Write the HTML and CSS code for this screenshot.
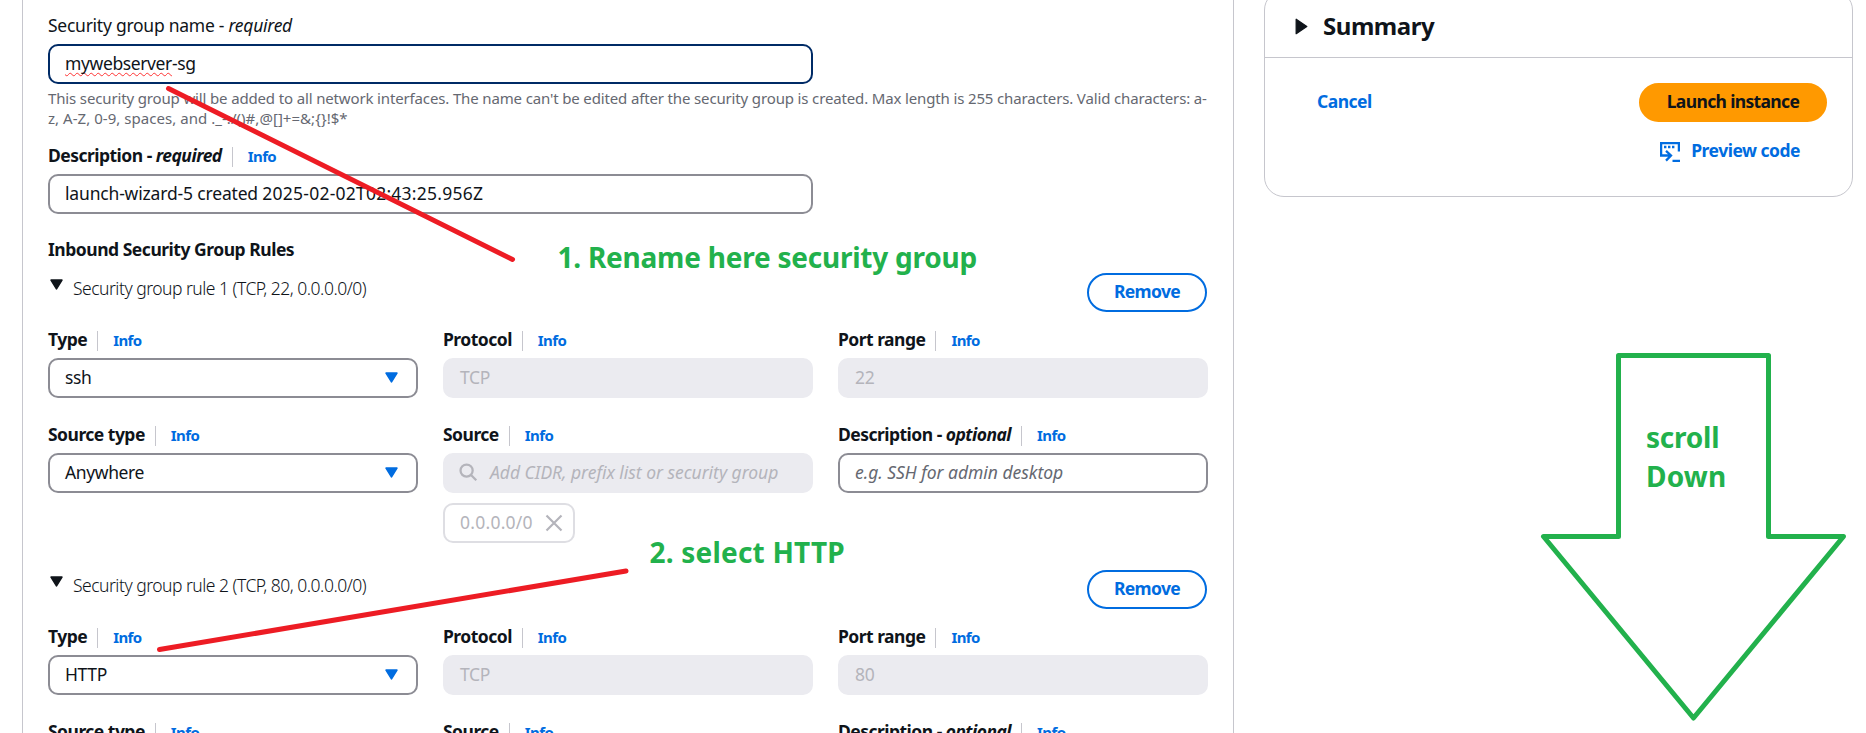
FILE: index.html
```html
<!DOCTYPE html>
<html lang="en">
<head>
<meta charset="utf-8">
<title>Launch an instance</title>
<link rel="stylesheet" href="styles.css">
</head>
<body>
<main class="page">
  <section class="panel">
    <div class="field half">
      <div class="label plain">Security group name - <em>required</em></div>
      <div class="input focused"><span><span class="misspelled">mywebserver</span>-sg</span></div>
    </div>
    <p class="hint">This security group will be added to all network interfaces. The name can't be edited after the security group is created. Max length is 255 characters. Valid characters: a-<br><span class="hint-end">z, A-Z, 0-9, spaces, and ._-:/()#,@[]+=&amp;;{}!$*</span></p>
    <div class="field half">
      <div class="label">Description - <em>required</em><a class="info">Info</a></div>
      <div class="input"><span><span class="origin">launch-wizard-5 created </span><span class="stamp">2025-02-02T02:43:25.956Z</span></span></div>
    </div>
    <h3 class="heading">Inbound Security Group Rules</h3>

    <div class="rule">
      <div class="rule-head">
        <svg class="caret" viewBox="0 0 12 10"><path d="M1 1h10L6 9z"/></svg>
        <span class="rule-title">Security group rule 1 (TCP, 22, 0.0.0.0/0)</span>
        <button class="btn outline">Remove</button>
      </div>
      <div class="grid">
        <div class="field">
          <div class="label">Type<a class="info">Info</a></div>
          <div class="input select">ssh<svg class="caret" viewBox="0 0 12 10"><path d="M1 1h10L6 9z"/></svg></div>
        </div>
        <div class="field">
          <div class="label">Protocol<a class="info">Info</a></div>
          <div class="input disabled">TCP</div>
        </div>
        <div class="field">
          <div class="label">Port range<a class="info">Info</a></div>
          <div class="input disabled">22</div>
        </div>
        <div class="field">
          <div class="label">Source type<a class="info">Info</a></div>
          <div class="input select">Anywhere<svg class="caret" viewBox="0 0 12 10"><path d="M1 1h10L6 9z"/></svg></div>
        </div>
        <div class="field">
          <div class="label">Source<a class="info">Info</a></div>
          <div class="input disabled search"><svg class="search-icon" viewBox="0 0 20 20"><circle cx="8" cy="8" r="6.4"/><path d="M12.6 12.6L18.2 18.2"/></svg><em>Add CIDR, prefix list or security group</em></div>
          <div class="token">0.0.0.0/0<svg class="close" viewBox="0 0 18 18"><path d="M1.5 1.5l15 15M16.5 1.5l-15 15"/></svg></div>
        </div>
        <div class="field">
          <div class="label">Description - <em>optional</em><a class="info">Info</a></div>
          <div class="input placeholder"><em>e.g. SSH for admin desktop</em></div>
        </div>
      </div>
    </div>

    <div class="rule">
      <div class="rule-head">
        <svg class="caret" viewBox="0 0 12 10"><path d="M1 1h10L6 9z"/></svg>
        <span class="rule-title">Security group rule 2 (TCP, 80, 0.0.0.0/0)</span>
        <button class="btn outline">Remove</button>
      </div>
      <div class="grid">
        <div class="field">
          <div class="label">Type<a class="info">Info</a></div>
          <div class="input select">HTTP<svg class="caret" viewBox="0 0 12 10"><path d="M1 1h10L6 9z"/></svg></div>
        </div>
        <div class="field">
          <div class="label">Protocol<a class="info">Info</a></div>
          <div class="input disabled">TCP</div>
        </div>
        <div class="field">
          <div class="label">Port range<a class="info">Info</a></div>
          <div class="input disabled">80</div>
        </div>
        <div class="field"><div class="label">Source type<a class="info">Info</a></div></div>
        <div class="field"><div class="label">Source<a class="info">Info</a></div></div>
        <div class="field"><div class="label">Description - <em>optional</em><a class="info">Info</a></div></div>
      </div>
    </div>
  </section>

  <aside class="summary">
    <header class="summary-head">
      <svg class="caret-right" viewBox="0 0 12 16"><path d="M1 1.2v13.6L11 8z"/></svg>
      <h2>Summary</h2>
    </header>
    <div class="summary-body">
      <a class="cancel">Cancel</a>
      <div class="actions">
        <button class="btn primary">Launch instance</button>
        <a class="preview">
          <svg class="code-icon" viewBox="0 0 20 20"><path d="M18.900 9.500V1.100H1.100v12.400h9.400M6 8.800l5 4.700L6 18.600M12.500 18.800H20"/><path d="M4 5h2.400M8 5h2.400M12 5h2.400"/></svg>
          Preview code
        </a>
      </div>
    </div>
  </aside>
</main>

<svg class="annotations" viewBox="0 0 1866 733">
  <path class="pointer" d="M168.500 88.500L512.500 259.500M159.500 649.500L626 571"/>
  <path class="arrow" d="M1618.500 355.500h150v181h75L1693.500 718 1543.500 536.500h75z"/>
  <text x="557.500" y="268">1. Rename here security group</text>
  <text class="wide" x="649.500" y="563">2. select HTTP</text>
  <text x="1646" y="448">scroll</text>
  <text class="wide" x="1646" y="487">Down</text>
</svg>
</body>
</html>
```
FILE: styles.css
```css
* { box-sizing: border-box; }

body {
  margin: 0;
  height: 733px;
  overflow: hidden;
  background: #fff;
  color: #0f141a;
  font: 400 17.5px/25px "Noto Sans", "Open Sans", sans-serif;
  letter-spacing: -0.38px;
}

.page {
  display: flex;
  align-items: flex-start;
  height: 733px;
  padding-left: 22px;
  overflow: hidden;
}

.panel {
  flex: none;
  width: 1212px;
  min-height: 733px;
  padding: 13px 25px 0;
  border: solid #c6c6cd;
  border-width: 0 1px;
}

.half { width: 765px; }

.label {
  display: flex;
  align-items: center;
  height: 25px;
  margin-bottom: 6px;
  font-weight: 700;
  letter-spacing: -0.52px;
  white-space: pre;
}

.label.plain {
  font-weight: 400;
  letter-spacing: -0.26px;
}

.info {
  height: 20px;
  margin: 2px 0 0 10px;
  padding-left: 15px;
  border-left: 1px solid #c6c6cd;
  color: #006ce0;
  font-size: 15px;
  line-height: 19px;
  letter-spacing: -0.6px;
}

.input {
  display: flex;
  align-items: center;
  height: 40px;
  padding: 0 15px 1px;
  border: 2px solid #8c8c94;
  border-radius: 10px;
  white-space: pre;
}

.focused { border-color: #002b66; }
.origin { letter-spacing: -0.17px; }
.stamp { letter-spacing: 0.23px; }

.misspelled {
  text-decoration: underline wavy #f33 1px;
  text-decoration-skip-ink: none;
  text-underline-offset: 2px;
}

.disabled {
  border-color: #ebebf0;
  background: #ebebf0;
  color: #b4b4bb;
}

.placeholder { color: #656871; }
.input em { letter-spacing: -0.03px; }

.select { justify-content: space-between; padding-right: 18px; }

.caret {
  width: 13px;
  height: 11px;
  fill: currentColor;
  stroke: currentColor;
  stroke-width: 1.5;
  stroke-linejoin: round;
}

.select .caret { color: #006ce0; }

.search { gap: 12px; padding-left: 14px; }

.search-icon {
  width: 19px;
  height: 19px;
  fill: none;
  stroke: #b4b4bb;
  stroke-width: 2.4;
}

.token {
  display: flex;
  align-items: center;
  justify-content: space-between;
  width: 132px;
  height: 40px;
  margin-top: 10px;
  padding: 0 10px 2px 15px;
  border: 2px solid #dedee3;
  border-radius: 10px;
  color: #b4b4bb;
  letter-spacing: 0.25px;
}

.close {
  width: 18px;
  height: 18px;
  margin-top: 2px;
  fill: none;
  stroke: #b4b4bb;
  stroke-width: 2.2;
}

.hint {
  margin: 4px 0 15px;
  color: #656871;
  font-size: 15px;
  line-height: 20px;
  letter-spacing: -0.145px;
  white-space: nowrap;
}

.hint-end { letter-spacing: 0.04px; }

.heading {
  margin: 23px 0 11px;
  font-size: 17.5px;
  font-weight: 700;
  line-height: 25px;
  letter-spacing: -0.48px;
}

.rule { margin-bottom: 27px; }

.rule-head {
  display: flex;
  align-items: flex-start;
  height: 39px;
  margin-bottom: 15px;
}

.rule-head .caret { margin: 6px 10px 0 2px; }

.rule-title {
  flex: 1;
  padding-top: 3px;
  font-weight: 300;
  letter-spacing: -0.5px;
}

.grid {
  display: grid;
  grid-template-columns: repeat(3, 370px);
  gap: 24px 25px;
}

.btn {
  height: 39px;
  padding: 0 0 3px;
  border: 2px solid #006ce0;
  border-radius: 20px;
  background: #fff;
  color: #006ce0;
  font: 700 17.5px/25px "Noto Sans", "Open Sans", sans-serif;
  letter-spacing: -0.65px;
}

.outline { width: 120px; margin-right: 1px; }

.primary {
  width: 188px;
  border-color: #f90;
  background: #f90;
  color: #0f141a;
}

.summary {
  flex: none;
  width: 589px;
  height: 207px;
  margin: -10px 0 0 30px;
  border: 1px solid #c6c6cd;
  border-radius: 20px;
}

.summary-head {
  display: flex;
  align-items: center;
  gap: 15px;
  height: 67px;
  padding: 4px 0 0 30px;
  border-bottom: 1px solid #c6c6cd;
}

.summary-head h2 {
  margin: 0;
  font-size: 24px;
  line-height: 30px;
  letter-spacing: -0.45px;
}

.caret-right {
  width: 13px;
  height: 17px;
  fill: #0f141a;
  stroke: #0f141a;
  stroke-width: 1.2;
  stroke-linejoin: round;
}

.summary-body {
  display: flex;
  justify-content: space-between;
  padding: 25px 25px 0 52px;
  color: #006ce0;
  font-weight: 700;
  letter-spacing: -0.5px;
}

.cancel { padding-top: 6px; }

.actions {
  display: flex;
  flex-direction: column;
  align-items: flex-end;
  gap: 16px;
}

.preview {
  display: flex;
  align-items: center;
  gap: 11px;
  height: 25px;
  margin-right: 27px;
}

.code-icon {
  width: 20px;
  height: 20px;
  margin-top: 3px;
  fill: none;
  stroke: #006ce0;
  stroke-width: 2.3;
}

.annotations {
  position: absolute;
  top: 0;
  left: 0;
  width: 1866px;
  height: 733px;
  fill: none;
  stroke-width: 5;
  stroke-linecap: round;
  stroke-linejoin: round;
  pointer-events: none;
}

.pointer { stroke: #ed1c24; }
.arrow { stroke: #22b14c; }

.annotations text {
  fill: #22b14c;
  font-size: 28px;
  font-weight: 700;
  letter-spacing: -0.23px;
}

.annotations .wide { letter-spacing: 0.2px; }
```
